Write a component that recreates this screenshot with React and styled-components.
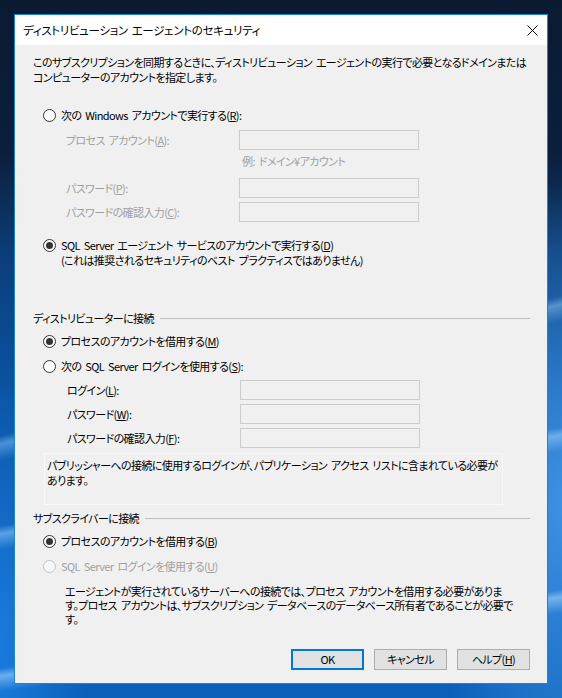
import React from 'react';
import styled, { createGlobalStyle } from 'styled-components';

const GlobalStyle = createGlobalStyle`
  html, body {
    margin: 0;
    padding: 0;
  }
  body {
    font-family: "Noto Sans CJK JP", "Noto Sans", sans-serif;
    font-size: 11px;
    color: #000;
  }
`;

const Desktop = styled.div`
  width: 562px;
  height: 698px;
  box-sizing: border-box;
  padding: 14px;
  background:
    linear-gradient(166deg, transparent 0 52%, rgba(150, 205, 255, 0.45) 53%, transparent 55%),
    linear-gradient(170deg, transparent 0 66%, rgba(160, 215, 255, 0.5) 67%, transparent 69%),
    linear-gradient(172deg, transparent 0 86%, rgba(170, 220, 255, 0.55) 87%, transparent 89%),
    radial-gradient(140px 320px at 100% 72%, rgba(80, 165, 245, 0.75), transparent),
    radial-gradient(90px 260px at 0% 92%, rgba(30, 130, 230, 0.8), transparent),
    linear-gradient(180deg, #0a1a31 0%, #0b1f3c 22%, #0b3d78 36%, #0a55a6 58%, #0a5fb8 100%);
`;

const Window = styled.div`
  width: 534px;
  height: 670px;
  box-sizing: border-box;
  border: 1px solid #1883d7;
  background: #f0f0f0;
  display: flex;
  flex-direction: column;
`;

const TitleBar = styled.div`
  height: 30px;
  flex: none;
  background: #fff;
  display: flex;
  align-items: center;
  justify-content: space-between;
  padding-left: 8px;
`;

const Title = styled.span`
  line-height: 15px;
  font-size: 11.5px;
  font-feature-settings: "palt";
  letter-spacing: -0.3px;
  word-spacing: 1.5px;
`;

const CloseButton = styled.div`
  width: 30px;
  height: 30px;
  display: flex;
  align-items: center;
  justify-content: center;
`;

const Body = styled.div`
  flex: 1;
  display: flex;
  flex-direction: column;
  padding: 10px 17px 13px 18px;
  font-feature-settings: "palt";
  letter-spacing: -0.6px;
  word-spacing: 2px;
  line-height: 15px;
`;

const Text = styled.div`
  white-space: nowrap;
  margin-top: ${({ $top }) => $top || 0}px;
  margin-left: ${({ $left }) => $left || 0}px;
  line-height: ${({ $lh }) => $lh || 15}px;
  color: ${({ $disabled }) => ($disabled ? '#a0a0a0' : '#000')};
`;

const RadioRow = styled.div`
  display: flex;
  align-items: flex-start;
  gap: 5px;
  margin-top: ${({ $top }) => $top || 0}px;
  margin-left: 10px;
  color: ${({ $disabled }) => ($disabled ? '#a0a0a0' : '#000')};
`;

const RadioCircle = styled.span`
  flex: none;
  width: 13px;
  height: 13px;
  margin-top: 1px;
  box-sizing: border-box;
  border-radius: 50%;
  border: 1px solid ${({ $disabled }) => ($disabled ? '#c4c4c4' : '#333')};
  background: ${({ $disabled }) => ($disabled ? '#f7f7f7' : '#fff')};
  display: flex;
  align-items: center;
  justify-content: center;

  &::after {
    content: '';
    width: 7px;
    height: 7px;
    border-radius: 50%;
    background: #333;
    display: ${({ $checked }) => ($checked ? 'block' : 'none')};
  }
`;

const RadioLabel = styled.span`
  white-space: nowrap;
  line-height: 15px;
`;

const FieldRow = styled.div`
  display: flex;
  align-items: center;
  height: 20px;
  margin-top: ${({ $top }) => $top || 0}px;
  margin-left: ${({ $left }) => $left || 33}px;
`;

const FieldLabel = styled.span`
  width: 173px;
  flex: none;
  white-space: nowrap;
  color: ${({ $disabled }) => ($disabled ? '#a0a0a0' : '#000')};
`;

const TextBox = styled.div`
  width: 180px;
  height: 20px;
  box-sizing: border-box;
  border: 1px solid #cccccc;
  background: #f0f0f0;
`;

const GroupHeader = styled.div`
  display: flex;
  align-items: center;
  gap: 6px;
  margin-top: ${({ $top }) => $top || 0}px;
  white-space: nowrap;

  &::after {
    content: '';
    flex: 1;
    height: 1px;
    background: #bdbdbd;
  }
`;

const NotePanel = styled.div`
  width: 459px;
  height: 52px;
  box-sizing: border-box;
  margin-top: 5px;
  margin-left: 11px;
  padding: 4px 2px;
  border: 1px solid #f8f8f8;
  white-space: nowrap;
`;

const ButtonBar = styled.div`
  margin-top: auto;
  display: flex;
  justify-content: flex-end;
  gap: 10px;
`;

const Button = styled.div`
  width: 73px;
  height: 21px;
  box-sizing: border-box;
  display: flex;
  align-items: center;
  justify-content: center;
  background: #e1e1e1;
  border: ${({ $primary }) => ($primary ? '2px solid #0078d7' : '1px solid #adadad')};
  white-space: nowrap;
`;

export default function App() {
  return (
    <>
      <GlobalStyle />
      <Desktop>
        <Window>
          <TitleBar>
            <Title>ディストリビューション エージェントのセキュリティ</Title>
            <CloseButton>
              <svg width="11" height="11" viewBox="0 0 11 11">
                <path d="M0.5 0.5 L10.5 10.5 M10.5 0.5 L0.5 10.5" stroke="#000" strokeWidth="1" fill="none" />
              </svg>
            </CloseButton>
          </TitleBar>

          <Body>
            <Text>
              このサブスクリプションを同期するときに、ディストリビューション エージェントの実行で必要となるドメインまたは
              <br />
              コンピューターのアカウントを指定します。
            </Text>

            <RadioRow $top={23}>
              <RadioCircle />
              <RadioLabel>次の Windows アカウントで実行する(<u>R</u>):</RadioLabel>
            </RadioRow>
            <FieldRow $top={7}>
              <FieldLabel $disabled>プロセス アカウント(<u>A</u>):</FieldLabel>
              <TextBox />
            </FieldRow>
            <Text $top={4} $left={209} $disabled>例: ドメイン¥アカウント</Text>
            <FieldRow $top={9}>
              <FieldLabel $disabled>パスワード(<u>P</u>):</FieldLabel>
              <TextBox />
            </FieldRow>
            <FieldRow $top={4}>
              <FieldLabel $disabled>パスワードの確認入力(<u>C</u>):</FieldLabel>
              <TextBox />
            </FieldRow>

            <RadioRow $top={16}>
              <RadioCircle $checked />
              <RadioLabel>
                SQL Server エージェント サービスのアカウントで実行する(<u>D</u>)
                <br />
                (これは推奨されるセキュリティのベスト プラクティスではありません)
              </RadioLabel>
            </RadioRow>

            <GroupHeader $top={43}>ディストリビューターに接続</GroupHeader>
            <RadioRow $top={8}>
              <RadioCircle $checked />
              <RadioLabel>プロセスのアカウントを借用する(<u>M</u>)</RadioLabel>
            </RadioRow>
            <RadioRow $top={10}>
              <RadioCircle />
              <RadioLabel>次の SQL Server ログインを使用する(<u>S</u>):</RadioLabel>
            </RadioRow>
            <FieldRow $top={6} $left={34}>
              <FieldLabel>ログイン(<u>L</u>):</FieldLabel>
              <TextBox />
            </FieldRow>
            <FieldRow $top={4} $left={34}>
              <FieldLabel>パスワード(<u>W</u>):</FieldLabel>
              <TextBox />
            </FieldRow>
            <FieldRow $top={4} $left={34}>
              <FieldLabel>パスワードの確認入力(<u>F</u>):</FieldLabel>
              <TextBox />
            </FieldRow>
            <NotePanel>
              パブリッシャーへの接続に使用するログインが、パブリケーション アクセス リストに含まれている必要が
              <br />
              あります。
            </NotePanel>

            <GroupHeader $top={6}>サブスクライバーに接続</GroupHeader>
            <RadioRow $top={8}>
              <RadioCircle $checked />
              <RadioLabel>プロセスのアカウントを借用する(<u>B</u>)</RadioLabel>
            </RadioRow>
            <RadioRow $top={10} $disabled>
              <RadioCircle $disabled />
              <RadioLabel>SQL Server ログインを使用する(<u>U</u>)</RadioLabel>
            </RadioRow>
            <Text $top={10} $left={32} $lh={14}>
              エージェントが実行されているサーバーへの接続では、プロセス アカウントを借用する必要がありま
              <br />
              す。プロセス アカウントは、サブスクリプション データベースのデータベース所有者であることが必要で
              <br />
              す。
            </Text>

            <ButtonBar>
              <Button $primary>OK</Button>
              <Button>キャンセル</Button>
              <Button>ヘルプ(<u>H</u>)</Button>
            </ButtonBar>
          </Body>
        </Window>
      </Desktop>
    </>
  );
}
